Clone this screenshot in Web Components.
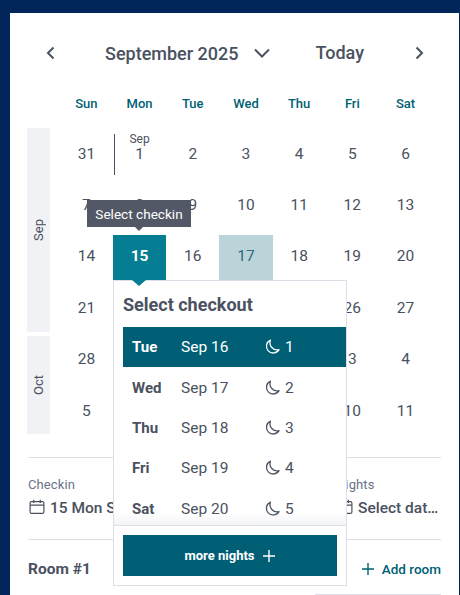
<!DOCTYPE html>
<html><head><meta charset="utf-8">
<style>
html,body{margin:0;padding:0;height:595px;overflow:hidden;background:#00265a;font-family:Roboto,"Liberation Sans",sans-serif}
body{padding:13px 1px 0 10px;box-sizing:border-box}
</style></head><body>
<hotel-panel></hotel-panel>
<script>
const ICON={
 left:'<svg width="12" height="16" viewBox="0 0 12 16" fill="none" stroke="currentColor" stroke-width="2"><path d="M9.5 2.5 4 8l5.5 5.5"/></svg>',
 right:'<svg width="12" height="16" viewBox="0 0 12 16" fill="none" stroke="currentColor" stroke-width="2"><path d="M2.5 2.5 8 8l-5.5 5.5"/></svg>',
 down:'<svg width="18" height="12" viewBox="0 0 18 12" fill="none" stroke="currentColor" stroke-width="2"><path d="M2 2.5 9 9.5 16 2.5"/></svg>',
 moon:'<svg width="16" height="16" viewBox="0 0 16 16" fill="none" stroke="currentColor" stroke-width="1.3" stroke-linejoin="round"><path d="M6.4 1.2A6.7 6.7 0 1 0 15 10.6 7.2 7.2 0 0 1 6.4 1.2Z"/></svg>',
 cal:'<svg width="16" height="16" viewBox="0 0 16 16" fill="none" stroke="currentColor" stroke-width="1.2"><rect x="1.1" y="2.6" width="13.8" height="11.8" rx="1.5"/><path d="M1.1 6.2h13.8M4.7 .8v3.2M11.3 .8v3.2"/></svg>',
 plus:'<svg width="14" height="14" viewBox="0 0 14 14" fill="none" stroke="currentColor" stroke-width="1.4"><path d="M7 1v12M1 7h12"/></svg>'
};
function def(name,css,html){
 const C=class extends HTMLElement{
  constructor(){super();const s=this.attachShadow({mode:'open'});s.innerHTML='<style>'+css+'</style>'+(typeof html==='function'?html(this):html);}
 };
 customElements.define(name,C);
}
def('cal-header',`
 :host{display:flex;align-items:center;height:30px;color:#4a5160;font-weight:500;font-size:18px}
 svg{display:block}
 .l{margin-left:34px;width:12px}
 .m{margin-left:49px;display:flex;align-items:center;gap:14px}
 .t{margin-left:45px;margin-top:-1px}
 .r{margin-left:50px;width:12px}
`,`<span class="l">${ICON.left}</span><span class="m"><span>September 2025</span>${ICON.down}</span><span class="t">Today</span><span class="r">${ICON.right}</span>`);

def('week-head',`
 :host{display:grid;grid-template-columns:repeat(7,53.2px);margin-left:49.8px;height:24px;align-items:center;text-align:center;color:#005f73;font-weight:500;font-size:13px}
`,['Sun','Mon','Tue','Wed','Thu','Fri','Sat'].map(d=>`<span>${d}</span>`).join(''));

def('day-cell',`
 :host{display:flex;align-items:center;justify-content:center;position:relative;color:#4a5160;font-size:15.5px}
 :host([sel]) .bg{background:#057d93}
 :host([range]) .bg{background:#bad4da}
 .bg{position:absolute;left:0;right:0;top:4px;bottom:0}
 span.n{position:relative}
 :host([sel]){color:#fff;font-weight:700}
 :host([range]){color:#2f6b78}
 :host([first])::before{content:"";position:absolute;left:1px;top:6px;bottom:4px;width:1px;background:#4a5160}
 .s{position:absolute;top:-13px;left:50%;transform:translateX(-50%);font-size:12px;font-weight:400}
`,h=>`<div class="bg"></div><span class="n">${h.hasAttribute('first')?'<span class="s">Sep</span>':''}<slot></slot></span>`);

def('month-strip',`
 :host{display:flex;align-items:center;justify-content:center;background:#f1f2f6;width:23px;color:#4a5160;font-size:13px}
 span{writing-mode:vertical-rl;transform:rotate(180deg)}
`,`<span><slot></slot></span>`);

def('cal-grid',`
 :host{display:flex;height:309px;padding-left:17px;box-sizing:border-box}
 .side{display:flex;flex-direction:column;gap:4px;width:32.8px;flex:none;height:306px}
 month-strip:first-child{height:204px}
 month-strip:last-child{height:98px}
 .days{display:grid;grid-template-columns:repeat(7,53.2px);grid-auto-rows:51.4px}
`,()=>{
 const days=[31,1,2,3,4,5,6,7,8,9,10,11,12,13,14,15,16,17,18,19,20,21,'','','','',26,27,28,'','','','',3,4,5,'','','','',10,11];
 return `<div class="side"><month-strip>Sep</month-strip><month-strip>Oct</month-strip></div><div class="days">`+days.map((d,i)=>`<day-cell${i==1?' first':''}${i==15?' sel':''}${i==17?' range':''}>${d}</day-cell>`).join('')+`</div>`;
});

def('check-tip',`
 :host{position:absolute;left:77px;top:187px;width:104px;height:27px;background:#525866;color:#fff;font-size:13.6px;display:flex;align-items:center;justify-content:center}
 :host::after{content:"";position:absolute;left:48px;top:27px;border:4.5px solid transparent;border-top:4px solid #525866;border-bottom:0}
`,`<slot></slot>`);

def('night-row',`
 :host{display:grid;grid-template-columns:49px 83px 20px auto;align-items:center;height:40.4px;padding-left:9px;color:#4a5160;font-size:15.5px}
 :host([on]){background:#005f75;color:#fff}
 b{font-weight:700;font-size:15px}
 .m{display:block;height:16px}
 .m svg{display:block}
 .c{margin-left:1px}
`,h=>`<b>${h.getAttribute('day')}</b><span class="d">${h.getAttribute('date')}</span><span class="m">${ICON.moon}</span><span class="c">${h.getAttribute('n')}</span>`);

def('checkout-pop',`
 :host{position:absolute;left:103px;top:267px;width:234px;height:306px;box-sizing:border-box;background:#fff;border:1px solid #dcdee8;display:flex;flex-direction:column}
 :host::before{content:"";position:absolute;left:18px;top:-1px;border:7px solid transparent;border-top:6px solid #057d93;border-bottom:0}
 h3{margin:0;height:46px;padding-left:9px;font-size:18px;font-weight:700;color:#4a5160;display:flex;align-items:center;flex:none}
 .list{padding-left:9px;height:198px;overflow:hidden;flex:none;position:relative}
 .list::after{content:"";position:absolute;left:0;right:0;bottom:0;height:12px;background:linear-gradient(rgba(255,255,255,0),rgba(240,241,245,.8))}
 .foot{border-top:1px solid #dcdee8;padding:9px 9px 0;flex:1}
 button{width:100%;height:41px;border:0;background:#005f75;color:#fff;font:700 13px Roboto,sans-serif;display:flex;align-items:center;justify-content:center;gap:7px}
 button svg{display:block}
`,`<h3>Select checkout</h3><div class="list"><slot></slot></div><div class="foot"><button>more nights ${ICON.plus}</button></div>`);

def('sum-field',`
 :host{display:flex;flex-direction:column;min-width:0;color:#4a5160}
 small{font-size:13px;color:#6b7388;height:17px;line-height:17px;font-weight:400;letter-spacing:.1px}
 div{display:flex;align-items:center;gap:5px;font-size:15.5px;font-weight:500;height:28px;min-width:0;white-space:nowrap;padding-left:1px}
 svg{flex:none;display:block}
 span{overflow:hidden;text-overflow:ellipsis;padding-top:2px}
`,h=>`<small>${h.getAttribute('label')}</small><div>${ICON.cal}<span>${h.getAttribute('value')}</span></div>`);

def('hotel-panel',`
 :host{display:block;position:relative;background:#fff;height:582px;overflow:hidden}
 cal-header{margin-top:25px}
 week-head{margin-top:23px;margin-bottom:13px}
 hr{border:0;border-top:1px solid #dcdee8;margin:0 18px 0 18px}
 .sum{display:grid;grid-template-columns:154px 154px 1fr;margin:0 18px;padding-top:18px;height:63px}
 .room{display:flex;justify-content:space-between;align-items:center;margin:0 18px;height:57px;color:#4a5160;font-weight:700;font-size:15.5px}
 .add{display:flex;align-items:center;gap:7px;color:#005f73;font-weight:500;font-size:13.5px}
 .add svg{display:block}
 .next{position:absolute;right:18px;bottom:0;width:126px;border-top:1px solid #dcdee8}
`,`<cal-header></cal-header><week-head></week-head><cal-grid></cal-grid>
 <div style="height:20px"></div>
 <hr>
 <div class="sum"><sum-field label="Checkin" value="15 Mon Sep 2025"></sum-field><span></span><sum-field label="Nights" value="Select dates"></sum-field></div>
 <hr>
 <div class="room"><span>Room #1</span><span class="add">${ICON.plus}Add room</span></div>
 <div class="next"></div>
 <check-tip>Select checkin</check-tip>
 <checkout-pop>
  <night-row on day="Tue" date="Sep 16" n="1"></night-row>
  <night-row day="Wed" date="Sep 17" n="2"></night-row>
  <night-row day="Thu" date="Sep 18" n="3"></night-row>
  <night-row day="Fri" date="Sep 19" n="4"></night-row>
  <night-row day="Sat" date="Sep 20" n="5"></night-row>
 </checkout-pop>`);
</script>
</body></html>
